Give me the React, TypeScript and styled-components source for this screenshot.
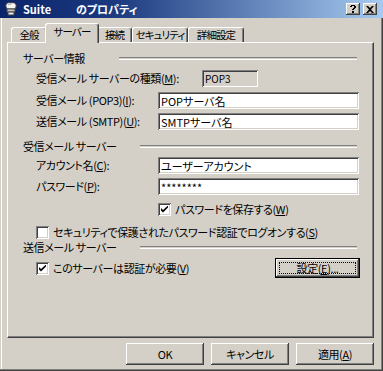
import React from 'react';
import styled, { createGlobalStyle, css } from 'styled-components';

const GlobalStyle = createGlobalStyle`
  html, body { margin: 0; padding: 0; background: #d4d0c8; }
  body {
    font-family: "Noto Sans CJK JP", "Noto Sans", sans-serif;
    font-size: 11px;
    color: #000;
  }
`;

const raised = css`
  background: #d4d0c8;
  box-shadow: inset -1px -1px #404040, inset 1px 1px #ffffff, inset -2px -2px #808080, inset 2px 2px #d4d0c8;
`;

const sunken = css`
  box-shadow: inset 1px 1px #808080, inset -1px -1px #ffffff, inset 2px 2px #404040, inset -2px -2px #d4d0c8;
`;

const Window = styled.div`
  width: 383px;
  height: 371px;
  box-sizing: border-box;
  background: #d4d0c8;
  display: flex;
  flex-direction: column;
  font-feature-settings: "palt";
  letter-spacing: -0.4px;
  white-space: nowrap;
  box-shadow: inset -1px -1px #404040, inset -2px -2px #808080, inset 1px 0 #d4d0c8, inset 2px 0 #ffffff;
  line-height: 1;
`;

const TitleBar = styled.div`
  height: 18px;
  display: flex;
  align-items: center;
  padding: 0 6px 0 3px;
  background: linear-gradient(to right, #0a246a 0%, #1c3a80 30%, #a6caf0 100%);
  color: #fff;
  font-weight: bold;
  letter-spacing: 0;
`;

const TitleText = styled.span`
  margin-left: 4px;
  flex: 1;
  white-space: pre;
`;

const CaptionButton = styled.div<{ $gap?: number }>`
  width: 14px;
  height: 12px;
  margin-left: ${p => p.$gap ?? 0}px;
  ${raised};
  display: flex;
  align-items: center;
  justify-content: center;
`;

const TabStrip = styled.div`
  display: flex;
  align-items: flex-end;
  height: 21px;
  margin-top: 4px;
  padding-left: 11px;
`;

const Tab = styled.div<{ $w: number; $active?: boolean }>`
  position: relative;
  box-sizing: border-box;
  width: ${p => p.$w}px;
  height: ${p => (p.$active ? 20 : 16)}px;
  margin: 0 ${p => (p.$active ? -2 : 0)}px;
  z-index: ${p => (p.$active ? 2 : 0)};
  background: #d4d0c8;
  border-top: 1px solid #fff;
  border-left: 1px solid #fff;
  border-right: 1px solid #404040;
  border-radius: 3px 3px 0 0;
  box-shadow: inset -1px 0 #808080;
  display: flex;
  align-items: ${p => (p.$active ? 'flex-start' : 'center')};
  padding-top: ${p => (p.$active ? 3 : 0)}px;
  justify-content: center;
  font-size: 10.5px;
  letter-spacing: -0.9px;
`;

const Panel = styled.div`
  position: relative;
  z-index: 1;
  box-sizing: border-box;
  height: 296px;
  margin: -1px 9px 0 7px;
  border-top: 1px solid #fff;
  border-left: 1px solid #fff;
  border-right: 1px solid #404040;
  border-bottom: 1px solid #404040;
  box-shadow: inset -1px -1px #808080;
  padding: 8px 14px 0 15px;
  display: flex;
  flex-direction: column;
`;

const SectionHeader = styled.div<{ $mt: number; $line: number }>`
  height: 14px;
  margin-top: ${p => p.$mt}px;
  display: flex;
  align-items: center;
  &::after {
    content: '';
    flex: 1;
    margin: 1px 2px 0 ${p => p.$line}px;
    height: 1px;
    border-top: 1px solid #808080;
    border-bottom: 1px solid #fff;
  }
`;

const FieldRow = styled.div<{ $mt: number }>`
  display: grid;
  grid-template-columns: 122px 1fr;
  align-items: center;
  height: 17px;
  margin-top: ${p => p.$mt}px;
  padding-left: 13px;
`;

const TextBox = styled.div<{ $readOnly?: boolean; $w?: number; $offset?: number }>`
  box-sizing: border-box;
  height: 17px;
  width: ${p => (p.$w ? `${p.$w}px` : 'auto')};
  margin-left: ${p => p.$offset ?? 0}px;
  background: ${p => (p.$readOnly ? '#d4d0c8' : '#fff')};
  ${sunken};
  display: flex;
  align-items: center;
  padding: 1px 3px 0;
  font-size: ${p => (p.$readOnly ? 10 : 11)}px;
  letter-spacing: 0;
`;

const CheckRow = styled.div<{ $mt: number; $indent: number }>`
  display: flex;
  align-items: center;
  gap: 4px;
  height: 13px;
  margin-top: ${p => p.$mt}px;
  margin-left: ${p => p.$indent}px;
`;

const Box = styled.div`
  width: 13px;
  height: 13px;
  box-sizing: border-box;
  background: #fff;
  ${sunken};
  display: flex;
  align-items: center;
  justify-content: center;
`;

const BottomRow = styled.div`
  display: flex;
  justify-content: space-between;
  align-items: center;
  height: 20px;
  margin-top: 4px;
  padding-left: 13px;
`;

const PushButton = styled.div<{ $w: number; $default?: boolean }>`
  box-sizing: border-box;
  width: ${p => p.$w}px;
  height: ${p => (p.$default ? 20 : 22)}px;
  display: flex;
  align-items: center;
  justify-content: center;
  ${p =>
    p.$default
      ? css`
          margin-right: -1px;
          border: 1px solid #000;
          background: #d4d0c8;
          box-shadow: inset -1px -1px #404040, inset 1px 1px #fff, inset -2px -2px #808080;
          padding: 3px;
        `
      : raised};
`;

const FocusRing = styled.div`
  flex: 1;
  align-self: stretch;
  border: 1px dotted #000;
  display: flex;
  align-items: center;
  justify-content: center;
`;

const Footer = styled.div`
  display: flex;
  justify-content: flex-end;
  gap: 7px;
  margin-top: 5px;
  padding-right: 9px;
`;

const Key = styled.u`
  text-underline-offset: 1px;
`;

const SuiteIcon = () => (
  <svg width="16" height="16" viewBox="0 0 16 16">
    <path d="M3 6 C2 2 6 1 8 2 C10 1 14 2 13 6 L12 8 L4 8 Z" fill="#f4f4f4" stroke="#404040" />
    <path d="M4 8 H12 V11 H4 Z" fill="#c8c8c8" stroke="#404040" />
    <path d="M5 11 H11 V14 H5 Z" fill="#e8e8e8" stroke="#404040" />
    <path d="M5 4 C6 3 7 3 8 4" stroke="#a0a0a0" fill="none" />
  </svg>
);

const Check = () => (
  <svg width="7" height="7" viewBox="0 0 7 7">
    <path d="M0 2 L0 4.5 L2 6.5 L7 1.5 L7 -0.5 L2 4 Z" fill="#000" />
  </svg>
);

function App() {
  return (
    <>
      <GlobalStyle />
      <Window>
        <TitleBar>
          <SuiteIcon />
          <TitleText>Suite          のプロパティ</TitleText>
          <CaptionButton>
            <svg width="8" height="8" viewBox="0 0 8 8">
              <path d="M1 1 H2 V0 H6 V1 H7 V3 H6 V4 H5 V5 H3 V4 H4 V3 H5 V1 H3 V2 H1 Z M3 6 H5 V8 H3 Z" fill="#000" />
            </svg>
          </CaptionButton>
          <CaptionButton $gap={3}>
            <svg width="8" height="7" viewBox="0 0 8 7">
              <path d="M0 0 L2 0 L4 2 L6 0 L8 0 L5 3.5 L8 7 L6 7 L4 5 L2 7 L0 7 L3 3.5 Z" fill="#000" />
            </svg>
          </CaptionButton>
        </TitleBar>

        <TabStrip>
          <Tab $w={36}>全般</Tab>
          <Tab $w={54} $active>サーバー</Tab>
          <Tab $w={35}>接続</Tab>
          <Tab $w={56}>セキュリティ</Tab>
          <Tab $w={56}>詳細設定</Tab>
        </TabStrip>

        <Panel>
          <SectionHeader $mt={0} $line={34}>サーバー情報</SectionHeader>
          <FieldRow $mt={5}>
            <span>受信メール サーバーの種類(<Key>M</Key>):</span>
            <TextBox $readOnly $w={56} $offset={44}>POP3</TextBox>
          </FieldRow>
          <FieldRow $mt={5}>
            <span>受信メール (POP3)(<Key>I</Key>):</span>
            <TextBox>POPサーバ名</TextBox>
          </FieldRow>
          <FieldRow $mt={4}>
            <span>送信メール (SMTP)(<Key>U</Key>):</span>
            <TextBox>SMTPサーバ名</TextBox>
          </FieldRow>

          <SectionHeader $mt={9} $line={23}>受信メール サーバー</SectionHeader>
          <FieldRow $mt={4}>
            <span>アカウント名(<Key>C</Key>):</span>
            <TextBox>ユーザーアカウント</TextBox>
          </FieldRow>
          <FieldRow $mt={4}>
            <span>パスワード(<Key>P</Key>):</span>
            <TextBox>********</TextBox>
          </FieldRow>
          <CheckRow $mt={8} $indent={135}>
            <Box><Check /></Box>
            <span>パスワードを保存する(<Key>W</Key>)</span>
          </CheckRow>
          <CheckRow $mt={10} $indent={13}>
            <Box />
            <span>セキュリティで保護されたパスワード認証でログオンする(<Key>S</Key>)</span>
          </CheckRow>

          <SectionHeader $mt={1} $line={23}>送信メール サーバー</SectionHeader>
          <BottomRow>
            <CheckRow $mt={0} $indent={0}>
              <Box><Check /></Box>
              <span>このサーバーは認証が必要(<Key>V</Key>)</span>
            </CheckRow>
            <PushButton $w={85} $default>
              <FocusRing>設定(<Key>E</Key>)...</FocusRing>
            </PushButton>
          </BottomRow>
        </Panel>

        <Footer>
          <PushButton $w={78}>OK</PushButton>
          <PushButton $w={78}>キャンセル</PushButton>
          <PushButton $w={78}>適用(<Key>A</Key>)</PushButton>
        </Footer>
      </Window>
    </>
  );
}

export default App;
